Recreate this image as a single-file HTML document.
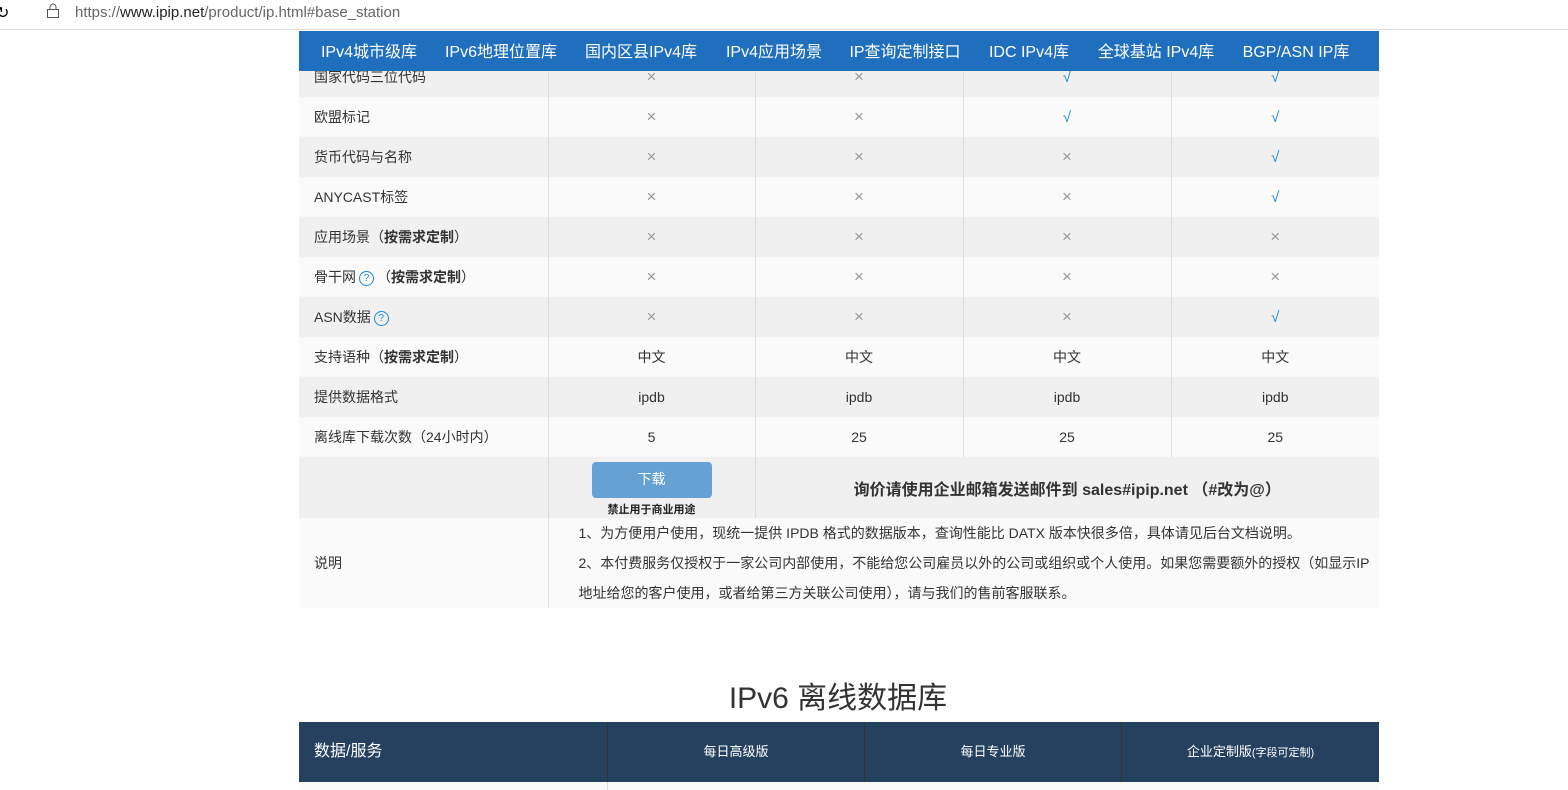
<!DOCTYPE html>
<html><head><meta charset="utf-8"><style>
*{margin:0;padding:0;box-sizing:border-box}
body{width:1568px;height:790px;overflow:hidden;background:#fff;font-family:"Liberation Sans","Noto Sans CJK SC",sans-serif;position:relative}
.bar{position:absolute;left:0;top:0;width:1568px;height:30px;border-bottom:1px solid #ddd}
.url{position:absolute;left:75px;top:4px;font-size:15px;color:#666}
.url b{font-weight:normal;color:#222}
.nav{position:absolute;left:299px;top:31px;width:1080px;height:40px;background:#1f6fbe;z-index:2}
.nav span{position:absolute;top:7px;color:#fff;font-size:16px;transform:translateX(-50%);white-space:nowrap}
table{position:absolute;left:299px;border-collapse:collapse;table-layout:fixed}
td{font-size:14px;color:#333;text-align:center;height:40px;border-left:1px solid #ddd;padding:0}
td:first-child{text-align:left;padding-left:15px;border-left:none}
tr:nth-child(odd) td{background:#f0f0f0}
tr:nth-child(even) td{background:#fafafa}
.x{color:#999;font-size:17px;font-weight:300}
.c{color:#1a8ad8;font-size:15px}
.q{display:inline-block;width:15px;height:15px;border:1px solid #1a8ad8;border-radius:50%;color:#1a8ad8;font-size:10px;line-height:13px;text-align:center;vertical-align:middle;margin:0 3px}
.btn{display:inline-block;width:120px;height:36px;background:#66a1d4;border-radius:4px;color:#fff;font-size:14px;line-height:34px}
h2{position:absolute;left:0;width:1676px;text-align:center;top:673px;font-size:30px;font-weight:normal;color:#333}
.t2{position:absolute;left:299px;top:722px;width:1080px;height:60px;background:#25415f;color:#fff}
.t2 div{position:absolute;top:0;height:60px;line-height:60px;font-size:13px;text-align:center;border-left:1px solid #333}
</style></head><body>
<div class="bar"><span style="position:absolute;left:-4px;top:3px;font-size:16px">↻</span>
<svg style="position:absolute;left:46px;top:2px" width="14" height="17" viewBox="0 0 14 17"><rect x="1.5" y="7.5" width="11" height="8" fill="none" stroke="#555"/><path d="M4 7.5V5a3 3 0 0 1 6 0v2.5" fill="none" stroke="#555"/></svg>
<div class="url">https://<b>www.ipip.net</b>/product/ip.html#base_station</div></div>
<div class="nav">
<span style="left:70px">IPv4城市级库</span><span style="left:202px">IPv6地理位置库</span><span style="left:342px">国内区县IPv4库</span><span style="left:475px">IPv4应用场景</span><span style="left:606px">IP查询定制接口</span><span style="left:730px">IDC IPv4库</span><span style="left:857px">全球基站 IPv4库</span><span style="left:997px">BGP/ASN IP库</span></div>
<table style="top:57px;width:1080px">
<colgroup><col style="width:249px"><col style="width:207px"><col style="width:208px"><col style="width:208px"><col style="width:208px"></colgroup>
<tr><td>国家代码三位代码</td><td class="x">×</td><td class="x">×</td><td class="c">√</td><td class="c">√</td></tr>
<tr><td>欧盟标记</td><td class="x">×</td><td class="x">×</td><td class="c">√</td><td class="c">√</td></tr>
<tr><td>货币代码与名称</td><td class="x">×</td><td class="x">×</td><td class="x">×</td><td class="c">√</td></tr>
<tr><td>ANYCAST标签</td><td class="x">×</td><td class="x">×</td><td class="x">×</td><td class="c">√</td></tr>
<tr><td>应用场景（<b>按需求定制</b>）</td><td class="x">×</td><td class="x">×</td><td class="x">×</td><td class="x">×</td></tr>
<tr><td>骨干网<span class="q">?</span>（<b>按需求定制</b>）</td><td class="x">×</td><td class="x">×</td><td class="x">×</td><td class="x">×</td></tr>
<tr><td>ASN数据<span class="q">?</span></td><td class="x">×</td><td class="x">×</td><td class="x">×</td><td class="c">√</td></tr>
<tr><td>支持语种（<b>按需求定制</b>）</td><td>中文</td><td>中文</td><td>中文</td><td>中文</td></tr>
<tr><td>提供数据格式</td><td>ipdb</td><td>ipdb</td><td>ipdb</td><td>ipdb</td></tr>
<tr><td>离线库下载次数（24小时内）</td><td>5</td><td>25</td><td>25</td><td>25</td></tr>
<tr><td style="height:61px"></td><td style="height:61px;vertical-align:top;padding-top:5px;position:relative"><span class="btn">下载</span><div style="position:absolute;left:0;right:0;top:46px;font-size:11px;font-weight:bold;line-height:14px;color:#222">禁止用于商业用途</div></td><td colspan="3" style="font-size:16px;font-weight:bold;color:#333">询价请使用企业邮箱发送邮件到 sales#ipip.net （#改为@）</td></tr>
<tr><td style="height:90px">说明</td><td colspan="4" style="text-align:left;padding:0 6px 0 30px;line-height:30px;font-size:14px">1、为方便用户使用，现统一提供 IPDB 格式的数据版本，查询性能比 DATX 版本快很多倍，具体请见后台文档说明。<br>2、本付费服务仅授权于一家公司内部使用，不能给您公司雇员以外的公司或组织或个人使用。如果您需要额外的授权（如显示IP地址给您的客户使用，或者给第三方关联公司使用），请与我们的售前客服联系。</td></tr>
</table>
<h2>IPv6 离线数据库</h2>
<div class="t2">
<div style="left:0;width:308px;text-align:left;padding-left:15px;font-size:16px;border:none">数据/服务</div>
<div style="left:308px;width:257px">每日高级版</div>
<div style="left:565px;width:257px">每日专业版</div>
<div style="left:822px;width:258px">企业定制版<span style="font-size:11px">(字段可定制)</span></div>
</div>
<div style="position:absolute;left:299px;top:782px;width:1080px;height:8px;background:#fafafa"><div style="position:absolute;left:308px;top:0;width:1px;height:8px;background:#ddd"></div></div>
</body></html>
